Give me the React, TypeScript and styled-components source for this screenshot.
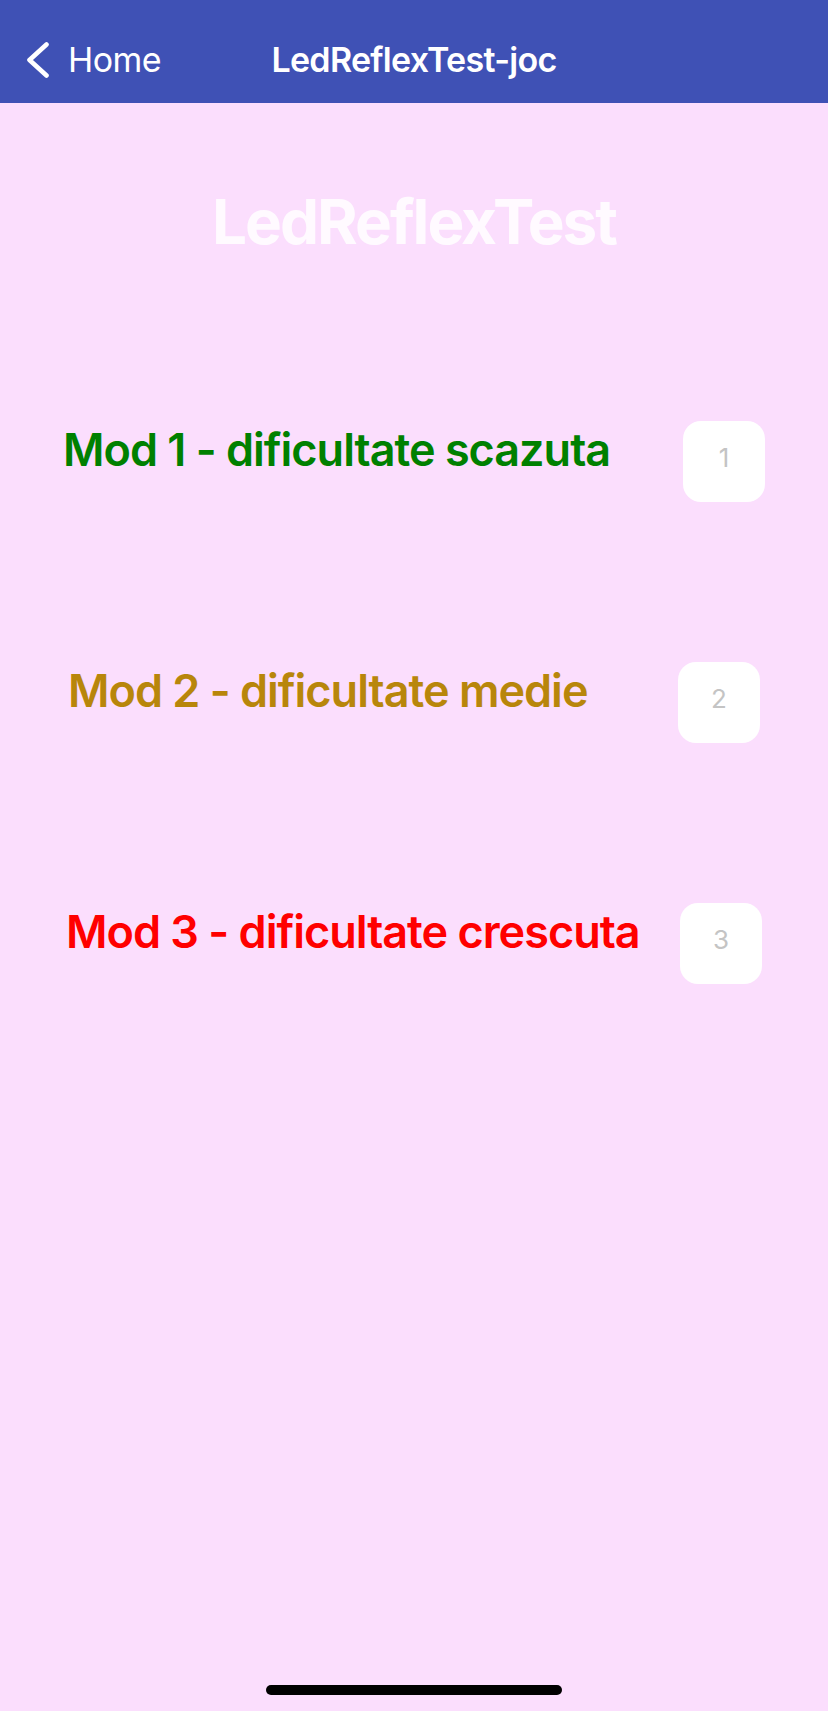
import React from 'react';
import styled, { createGlobalStyle } from 'styled-components';

const GlobalStyle = createGlobalStyle`
  html, body {
    margin: 0;
    padding: 0;
    background: #fbdefd;
  }
  * {
    box-sizing: border-box;
  }
`;

const Screen = styled.div`
  display: flex;
  flex-direction: column;
  height: 100vh;
  background: #fbdefd;
  font-family: Inter, "Liberation Sans", sans-serif;
`;

const NavBar = styled.header`
  display: grid;
  grid-template-columns: 1fr auto 1fr;
  align-items: center;
  height: 103px;
  padding: 16px 27px 0;
  background: #3f51b5;
  color: #ffffff;
`;

const BackButton = styled.button`
  display: flex;
  align-items: center;
  gap: 19px;
  justify-self: start;
  padding: 0;
  border: none;
  background: none;
  color: #ffffff;
  font-family: inherit;
  font-size: 34px;
  font-weight: 400;
  letter-spacing: -0.6px;
  line-height: 1;
  cursor: pointer;
`;

const NavTitle = styled.h1`
  margin: 0;
  font-size: 34px;
  font-weight: 600;
  letter-spacing: -0.7px;
  line-height: 1;
`;

const GameTitle = styled.h2`
  margin: 88px 0 0;
  text-align: center;
  font-size: 62px;
  font-weight: 700;
  letter-spacing: -2px;
  line-height: 1;
  color: rgba(255, 255, 255, 0.85);
`;

const ModeList = styled.div`
  display: flex;
  flex-direction: column;
  gap: 160px;
  margin-top: 168px;
`;

const ModeRow = styled.div<{ $inset: number }>`
  display: flex;
  align-items: flex-start;
  justify-content: space-between;
  height: 81px;
  padding: 0 ${(p) => p.$inset}px;
`;

const ModeLabel = styled.span<{ $color: string }>`
  margin-top: 6px;
  font-size: 45px;
  font-weight: 600;
  letter-spacing: -1px;
  line-height: 1;
  color: ${(p) => p.$color};
`;

const ModeButton = styled.button`
  display: flex;
  align-items: center;
  justify-content: center;
  width: 82px;
  height: 81px;
  padding: 0 0 8px;
  border: none;
  border-radius: 18px;
  background: #ffffff;
  color: #c4c4c4;
  font-family: inherit;
  font-size: 26px;
  font-weight: 400;
  line-height: 1;
  cursor: pointer;
`;

const HomeIndicator = styled.div`
  align-self: center;
  width: 296px;
  height: 10px;
  margin: auto 0 16px;
  border-radius: 5px;
  background: #000000;
`;

const modes = [
  { id: 1, label: 'Mod 1 - dificultate scazuta', color: '#008000', inset: 63 },
  { id: 2, label: 'Mod 2 - dificultate medie', color: '#b8860b', inset: 68 },
  { id: 3, label: 'Mod 3 - dificultate crescuta', color: '#ff0000', inset: 66 },
];

const Chevron: React.FC = () => (
  <svg width="22" height="36" viewBox="0 0 22 36" fill="none">
    <polyline
      points="19.5,2.5 2.5,18 19.5,33.5"
      stroke="#ffffff"
      strokeWidth="4.6"
      strokeLinecap="round"
      strokeLinejoin="round"
    />
  </svg>
);

const App: React.FC = () => {
  return (
    <Screen>
      <GlobalStyle />
      <NavBar>
        <BackButton>
          <Chevron />
          Home
        </BackButton>
        <NavTitle>LedReflexTest-joc</NavTitle>
      </NavBar>
      <GameTitle>LedReflexTest</GameTitle>
      <ModeList>
        {modes.map((m) => (
          <ModeRow key={m.id} $inset={m.inset}>
            <ModeLabel $color={m.color}>{m.label}</ModeLabel>
            <ModeButton>{m.id}</ModeButton>
          </ModeRow>
        ))}
      </ModeList>
      <HomeIndicator />
    </Screen>
  );
};

export default App;
